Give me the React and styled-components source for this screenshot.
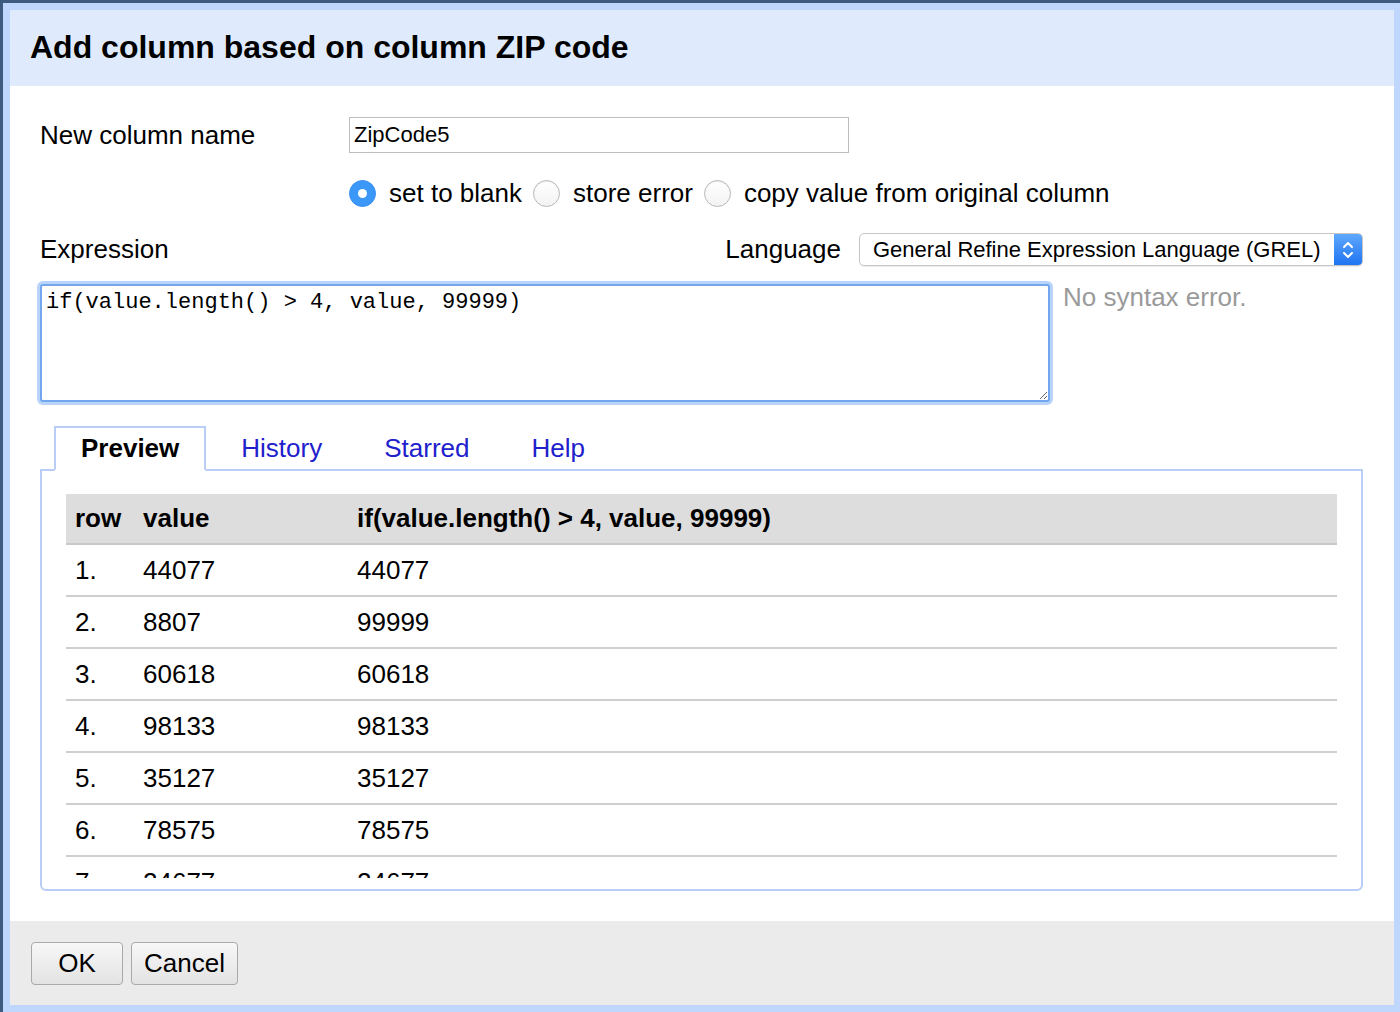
import styled, { createGlobalStyle } from 'styled-components';

const GlobalStyle = createGlobalStyle`
  html, body {
    margin: 0;
    padding: 0;
    background: #3d5a7f;
  }
  body {
    font-family: "Liberation Sans", Arial, sans-serif;
    color: #000;
  }
  * { box-sizing: border-box; }
`;

const rows = [
  ['1.', '44077', '44077'],
  ['2.', '8807', '99999'],
  ['3.', '60618', '60618'],
  ['4.', '98133', '98133'],
  ['5.', '35127', '35127'],
  ['6.', '78575', '78575'],
  ['7.', '24677', '24677'],
  ['8.', '10001', '10001'],
];

const tabs = ['Preview', 'History', 'Starred', 'Help'];

function Radio({ checked, label }) {
  return (
    <RadioLabel>
      <RadioDot checked={checked} />
      <span>{label}</span>
    </RadioLabel>
  );
}

function App() {
  return (
    <>
      <GlobalStyle />
      <Frame>
        <Dialog>
          <Header>
            <Title>Add column based on column ZIP code</Title>
          </Header>
          <Body>
            <NameRow>
              <FieldLabel>New column name</FieldLabel>
              <TextInput defaultValue="ZipCode5" />
            </NameRow>
            <RadioRow>
              <Radio checked label="set to blank" />
              <Radio label="store error" />
              <Radio label="copy value from original column" />
            </RadioRow>
            <ExprHeader>
              <FieldLabel>Expression</FieldLabel>
              <LangGroup>
                <FieldLabel>Language</FieldLabel>
                <Select>
                  <SelectText>General Refine Expression Language (GREL)</SelectText>
                  <SelectArrow>
                    <svg width="14" height="22" viewBox="0 0 14 22" fill="none"
                      stroke="#fff" strokeWidth="2" strokeLinecap="round" strokeLinejoin="round">
                      <path d="M3 8 L7 4 L11 8" />
                      <path d="M3 14 L7 18 L11 14" />
                    </svg>
                  </SelectArrow>
                </Select>
              </LangGroup>
            </ExprHeader>
            <ExprRow>
              <Expression defaultValue="if(value.length() > 4, value, 99999)" spellCheck={false} />
              <Status>No syntax error.</Status>
            </ExprRow>
            <TabBar>
              {tabs.map((t, i) => (
                <Tab key={t} active={i === 0}>{t}</Tab>
              ))}
            </TabBar>
            <Panel>
              <Scroll>
                <Table>
                  <HeadRow>
                    <Cell>row</Cell>
                    <Cell>value</Cell>
                    <Cell>if(value.length() &gt; 4, value, 99999)</Cell>
                  </HeadRow>
                  {rows.map((r) => (
                    <DataRow key={r[0]}>
                      <Cell>{r[0]}</Cell>
                      <Cell>{r[1]}</Cell>
                      <Cell>{r[2]}</Cell>
                    </DataRow>
                  ))}
                </Table>
              </Scroll>
            </Panel>
          </Body>
          <Footer>
            <Button>OK</Button>
            <Button>Cancel</Button>
          </Footer>
        </Dialog>
      </Frame>
    </>
  );
}

export default App;

const Frame = styled.div`
  width: 1400px;
  height: 1012px;
  background: #bfd7fc;
  border-top: 3px solid #3d5a7f;
  border-left: 3px solid #3d5a7f;
  padding: 7px 6px 7px 7px;
`;
const Dialog = styled.div`
  height: 100%;
  display: flex;
  flex-direction: column;
  background: #fff;
`;
const Header = styled.div`
  height: 76px;
  background: #dfebfd;
  display: flex;
  align-items: center;
  padding-left: 20px;
  padding-bottom: 2px;
`;
const Title = styled.h1`
  margin: 0;
  font-size: 32px;
  font-weight: 700;
`;
const Body = styled.div`
  flex: 1;
  padding: 31px 31px 0 30px;
  display: flex;
  flex-direction: column;
`;
const NameRow = styled.div`
  display: flex;
  align-items: center;
`;
const FieldLabel = styled.span`
  font-size: 26px;
  ${NameRow} & {
    width: 309px;
  }
`;
const TextInput = styled.input`
  width: 500px;
  height: 36px;
  border: 1px solid #bdbdbd;
  padding: 0 4px;
  font-family: "Liberation Sans", Arial, sans-serif;
  font-size: 22px;
  color: #000;
  outline: none;
`;
const RadioRow = styled.div`
  display: flex;
  align-items: center;
  margin-top: 27px;
  padding-left: 309px;
  gap: 11px;
  height: 27px;
`;
const RadioLabel = styled.label`
  display: flex;
  align-items: center;
  gap: 13px;
  font-size: 26px;
`;
const RadioDot = styled.span`
  width: 27px;
  height: 27px;
  border-radius: 50%;
  display: flex;
  align-items: center;
  justify-content: center;
  background: ${(p) => (p.checked ? '#3b98f8' : 'linear-gradient(#fff, #f3f3f3)')};
  border: 1px solid ${(p) => (p.checked ? '#3a8ff0' : '#b9b9b9')};
  box-shadow: ${(p) => (p.checked ? 'none' : 'inset 0 1px 1px rgba(0,0,0,0.08)')};
  &::after {
    content: '';
    display: ${(p) => (p.checked ? 'block' : 'none')};
    width: 9px;
    height: 9px;
    border-radius: 50%;
    background: #fff;
  }
`;
const ExprHeader = styled.div`
  display: flex;
  align-items: center;
  justify-content: space-between;
  margin-top: 26px;
  height: 33px;
`;
const LangGroup = styled.div`
  display: flex;
  align-items: center;
  gap: 18px;
`;
const Select = styled.div`
  width: 504px;
  height: 33px;
  display: flex;
  align-items: stretch;
  border: 1px solid #c6c6c6;
  border-radius: 5px;
  box-shadow: 0 1px 1px rgba(0,0,0,0.08);
  overflow: hidden;
`;
const SelectText = styled.span`
  flex: 1;
  display: flex;
  align-items: center;
  padding-left: 13px;
  font-size: 22px;
  white-space: nowrap;
`;
const SelectArrow = styled.span`
  width: 28px;
  display: flex;
  align-items: center;
  justify-content: center;
  background: linear-gradient(#5fa8fc, #1f74f2);
`;
const ExprRow = styled.div`
  display: flex;
  align-items: flex-start;
  gap: 13px;
  margin-top: 18px;
`;
const Expression = styled.textarea`
  width: 1010px;
  height: 118px;
  margin: 0;
  border: 2px solid #72a6ef;
  border-radius: 3px;
  box-shadow: 0 0 0 3px #b8d4fb;
  padding: 4px 4px;
  font-family: "Liberation Mono", "Courier New", monospace;
  font-size: 22px;
  line-height: 26px;
  color: #000;
  outline: none;
  resize: both;
`;
const Status = styled.span`
  font-size: 26px;
  color: #9a9a9a;
  margin-top: -2px;
`;
const TabBar = styled.div`
  display: flex;
  margin-top: 24px;
  padding-left: 14px;
  margin-bottom: -2px;
  position: relative;
  z-index: 1;
`;
const Tab = styled.div`
  height: 45px;
  display: flex;
  align-items: center;
  padding: 0 25px;
  margin-right: 8px;
  font-size: 26px;
  font-weight: ${(p) => (p.active ? 700 : 400)};
  color: ${(p) => (p.active ? '#000' : '#2020cc')};
  background: ${(p) => (p.active ? '#fff' : 'transparent')};
  border: 2px solid ${(p) => (p.active ? '#bacdf7' : 'transparent')};
  border-bottom: 2px solid ${(p) => (p.active ? '#fff' : 'transparent')};
  cursor: pointer;
`;
const Panel = styled.div`
  height: 422px;
  border: 2px solid #bacdf7;
  border-radius: 0 0 6px 6px;
  padding: 23px 24px 11px 24px;
`;
const Scroll = styled.div`
  height: 100%;
  overflow: hidden;
`;
const Table = styled.div`
  display: flex;
  flex-direction: column;
`;
const HeadRow = styled.div`
  display: grid;
  grid-template-columns: 68px 214px 1fr;
  height: 51px;
  align-items: center;
  background: #dddddd;
  border-bottom: 2px solid #c9c9c9;
  font-weight: 700;
`;
const DataRow = styled.div`
  display: grid;
  grid-template-columns: 68px 214px 1fr;
  height: 52px;
  align-items: center;
  border-bottom: 2px solid #cfcfcf;
`;
const Cell = styled.span`
  padding-left: 9px;
  font-size: 26px;
  white-space: nowrap;
`;
const Footer = styled.div`
  height: 84px;
  background: #ebebeb;
  display: flex;
  align-items: center;
  gap: 8px;
  padding-left: 21px;
`;
const Button = styled.button`
  min-width: 92px;
  height: 43px;
  padding: 0 12px;
  border: 1px solid #a9a9a9;
  border-radius: 4px;
  background: linear-gradient(#f7f7f7, #e3e3e3);
  font-family: "Liberation Sans", Arial, sans-serif;
  font-size: 26px;
  color: #000;
`;
